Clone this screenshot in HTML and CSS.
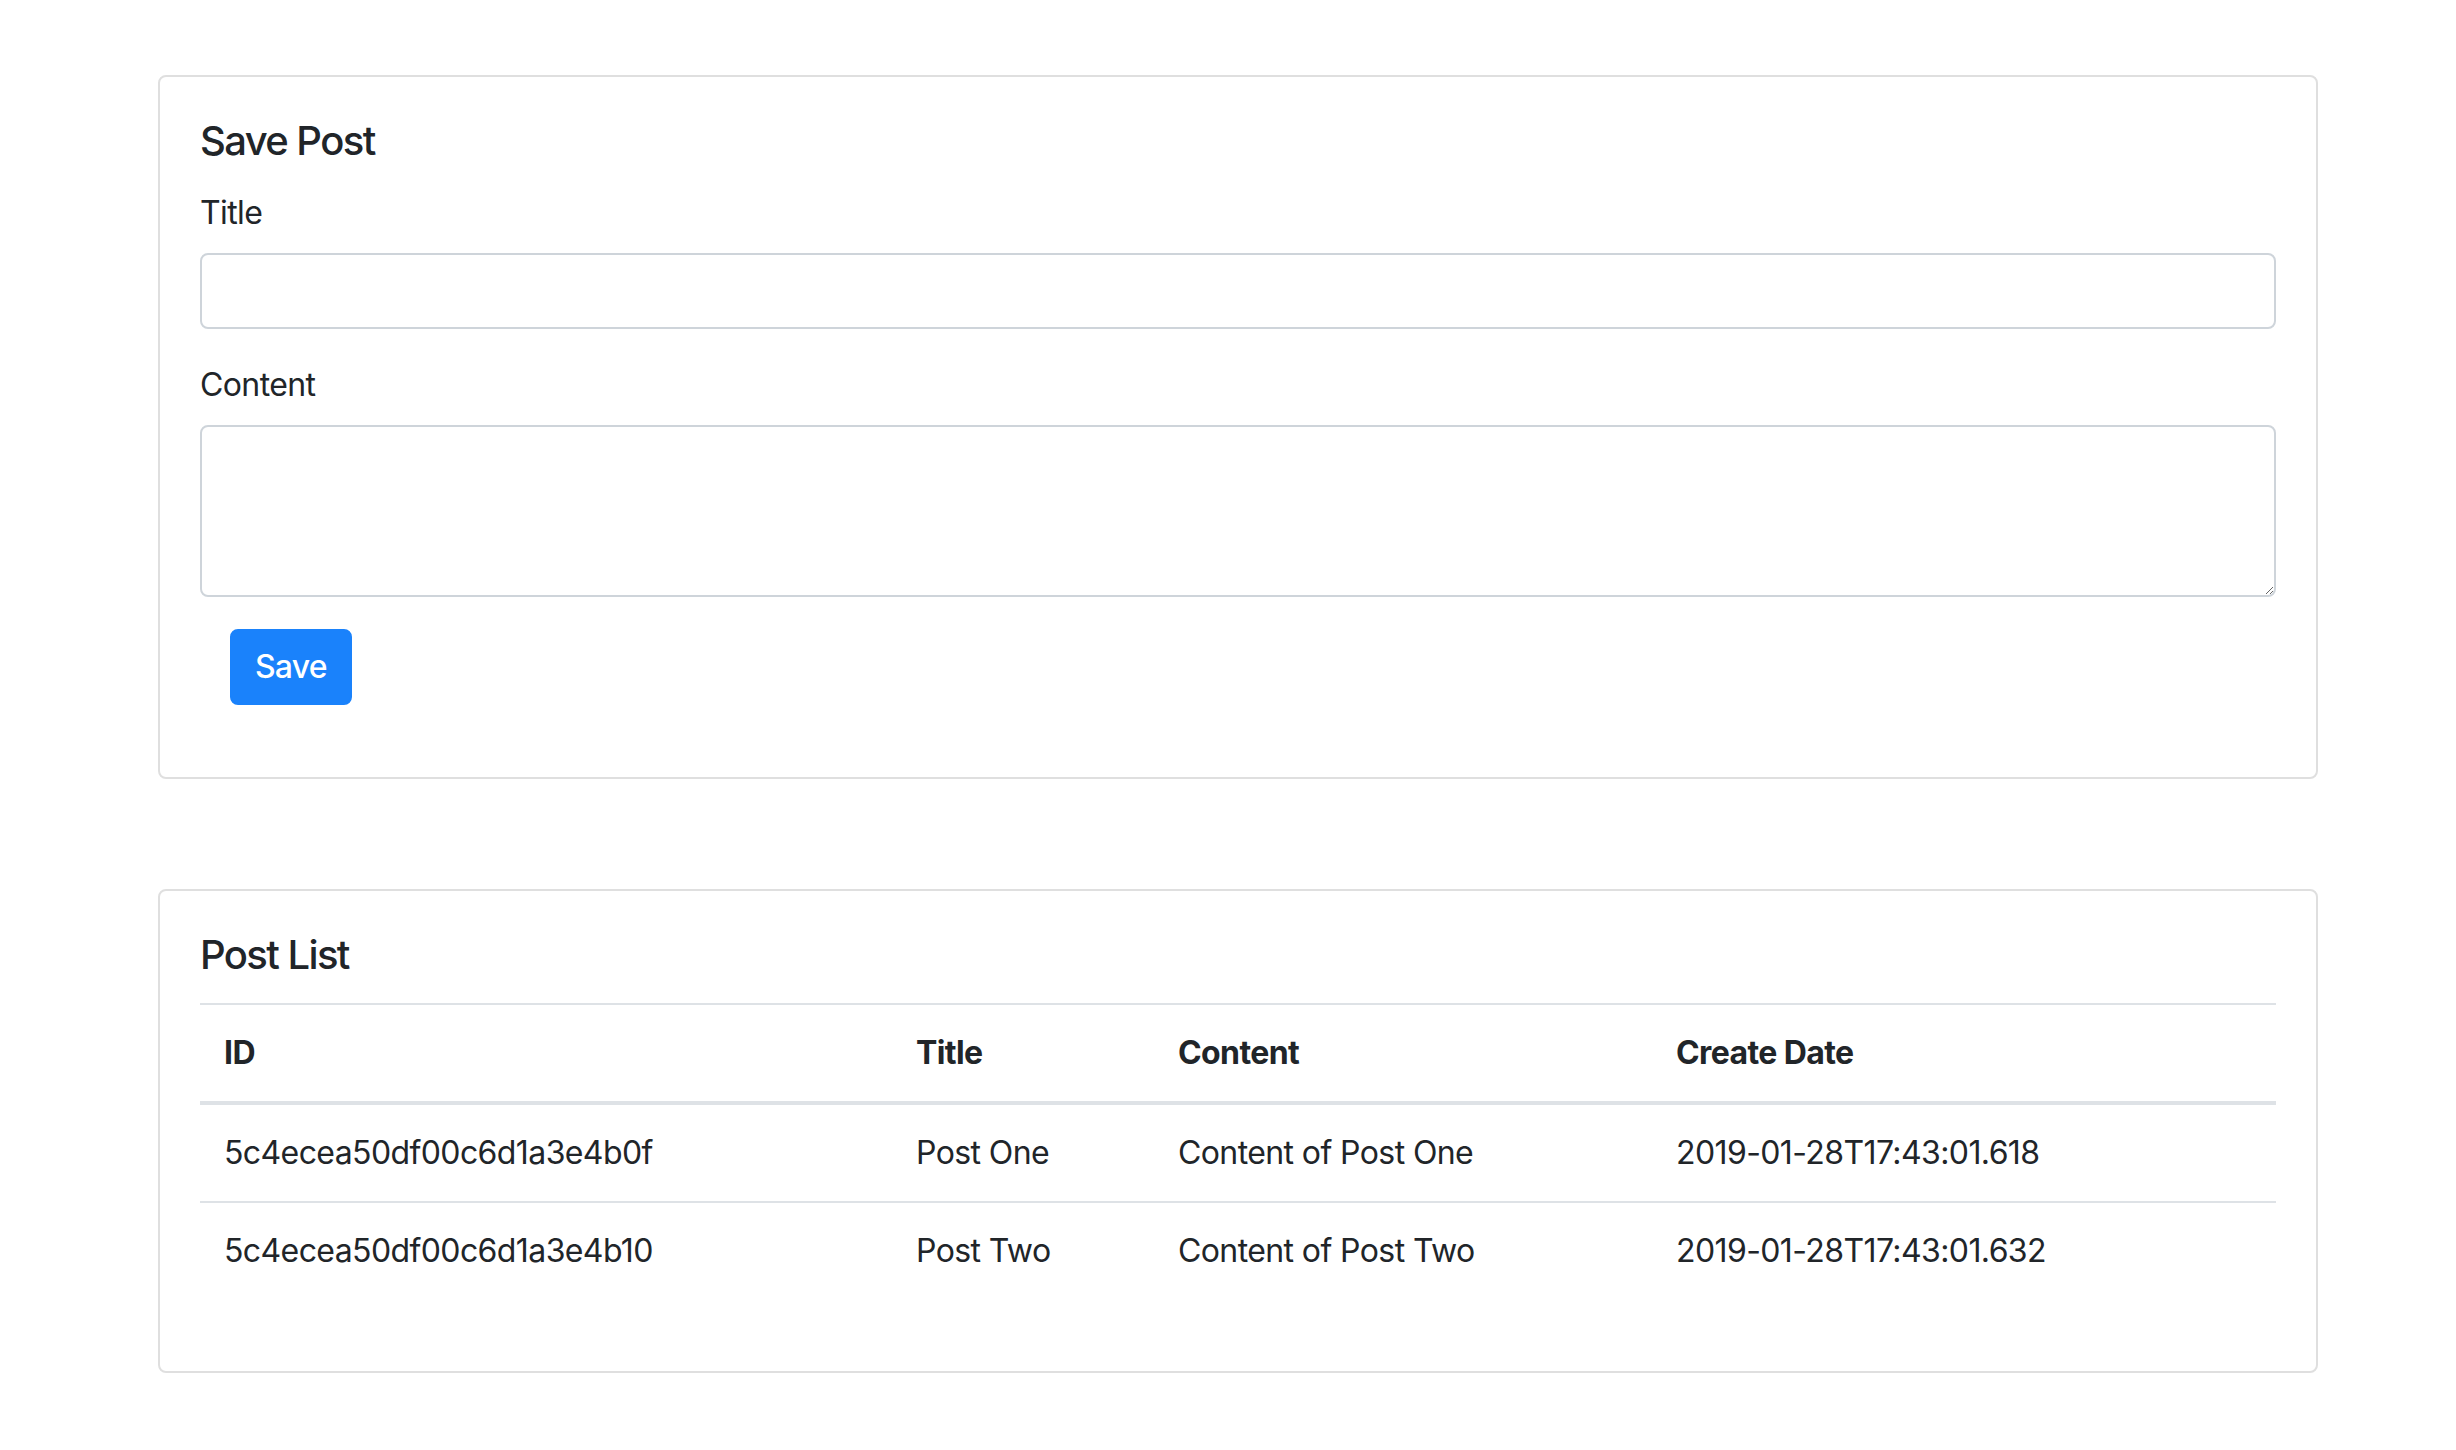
FILE: index.html
```html
<!DOCTYPE html>
<html>
<head>
<meta charset="utf-8">
<link rel="stylesheet" href="styles.css">
</head>
<body>
<div class="container">
  <div class="card">
    <div class="card-body">
      <h5 class="card-title">Save Post</h5>
      <div class="form-group">
        <label class="label">Title</label>
        <input class="form-control" type="text">
      </div>
      <div class="form-group">
        <label class="label">Content</label>
        <textarea class="form-control textarea" rows="3"></textarea>
      </div>
      <div class="form-group">
        <button class="btn">Save</button>
      </div>
    </div>
  </div>

  <div class="card card-list">
    <div class="card-body">
      <h5 class="card-title">Post List</h5>
      <table class="table">
        <colgroup>
          <col class="c-id"><col class="c-title"><col class="c-content"><col class="c-date">
        </colgroup>
        <thead>
          <tr><th>ID</th><th>Title</th><th>Content</th><th>Create Date</th></tr>
        </thead>
        <tbody>
          <tr><td>5c4ecea50df00c6d1a3e4b0f</td><td>Post One</td><td>Content of Post One</td><td>2019-01-28T17:43:01.618</td></tr>
          <tr><td>5c4ecea50df00c6d1a3e4b10</td><td>Post Two</td><td>Content of Post Two</td><td>2019-01-28T17:43:01.632</td></tr>
        </tbody>
      </table>
    </div>
  </div>
</div>
</body>
</html>
```
FILE: styles.css
```css
* { box-sizing: border-box; }
html, body { margin: 0; padding: 0; background: #fff; }
body {
  font-family: Inter, "Helvetica Neue", Arial, sans-serif;
  font-size: 32px;
  line-height: 48px;
  letter-spacing: -0.6px;
  color: #212529;
}
.container {
  width: 2160px;
  margin-left: 158px;
  padding-top: 75px;
}
.card {
  border: 2px solid #dfdfdf;
  border-radius: 8px;
  background: #fff;
}
.card-list { margin-top: 110px; }
.card-body { padding: 40px; }
.card-title {
  margin: 0 0 24px 0;
  font-size: 40px;
  line-height: 48px;
  font-weight: 500;
  letter-spacing: -1.6px;
}
.form-group { margin-bottom: 32px; }
.label {
  display: block;
  margin-bottom: 16px;
}
.form-control {
  display: block;
  width: 100%;
  height: 76px;
  padding: 12px 24px;
  font: inherit;
  color: #495057;
  border: 2px solid #ced4da;
  border-radius: 8px;
  background: #fff;
  outline: none;
}
.textarea {
  height: 172px;
  resize: vertical;
}
.btn {
  margin-left: 30px;
  height: 76px;
  padding: 12px 23px;
  font: inherit;
  font-weight: 500;
  letter-spacing: -0.8px;
  color: #fff;
  background: #1a82fb;
  border: 2px solid #1a82fb;
  border-radius: 8px;
}
.table {
  width: 100%;
  border-collapse: collapse;
  margin-bottom: 32px;
}
.c-id { width: 692px; }
.c-title { width: 262px; }
.c-content { width: 498px; }
.c-date { width: 624px; }
.table th, .table td {
  padding: 24px;
  text-align: left;
  vertical-align: top;
  border-top: 2px solid #dee2e6;
}
.table th { font-weight: 700; }
.table thead th { border-bottom: 4px solid #dee2e6; }
```
